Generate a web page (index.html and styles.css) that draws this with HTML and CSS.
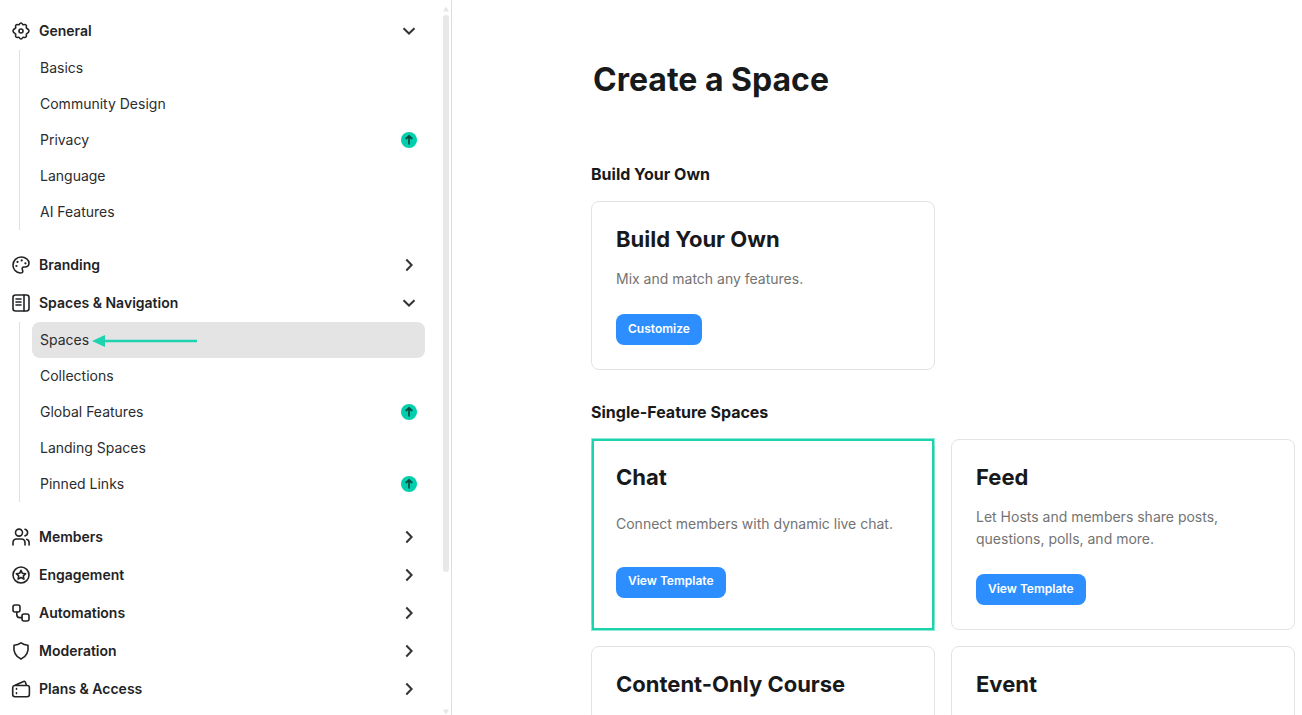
FILE: index.html
```html
<!DOCTYPE html>
<html lang="en">
<head>
<meta charset="utf-8">
<meta name="viewport" content="width=device-width, initial-scale=1">
<title>Create a Space</title>
<link rel="stylesheet" href="styles.css">
</head>
<body>
<svg class="sprite" aria-hidden="true">
  <symbol id="chevron-down" viewBox="0 0 16 16"><path d="M2.5 5.2 8 10.5l5.500-5.300"/></symbol>
  <symbol id="chevron-right" viewBox="0 0 16 16"><path d="M5.300 2.500 10.600 8l-5.300 5.500"/></symbol>
  <symbol id="upgrade" viewBox="0 0 16 16"><circle cx="8" cy="8" r="8" fill="#00ceac" stroke="none"/><path d="M8 12.500V4.500M4.700 7 8 4l3.300 3" stroke="#0b4a3f" stroke-width="1.700" fill="none"/></symbol>
</svg>
<div class="app">
  <aside class="sidebar">
    <nav class="nav" aria-label="Settings">
      <button class="group" type="button" aria-expanded="true">
        <svg class="icon" viewBox="0 0 18 18"><path d="M7.300 2.300C7.800 1.400 8.300 1 9 1s1.200.4 1.700 1.300c.2.400.6.500 1 .4 1-.3 1.800-.2 2.300.3s.6 1.300.3 2.300c-.1.400 0 .8.400 1C15.600 6.800 17 7.800 17 9s-1.400 2.200-2.300 2.700c-.4.200-.5.600-.4 1 .3 1 .2 1.800-.3 2.300s-1.300.6-2.300.3c-.4-.1-.8 0-1 .4C10.200 16.600 9.700 17 9 17s-1.200-.4-1.700-1.300c-.2-.4-.6-.5-1-.4-1 .3-1.800.2-2.300-.3s-.6-1.300-.3-2.300c.1-.4 0-.8-.4-1C2.400 11.200 1 10.200 1 9s1.400-2.200 2.300-2.700c.4-.2.500-.6.400-1C3.400 4.300 3.500 3.500 4 3s1.300-.6 2.300-.3c.4.100.8 0 1-.4Z"/><circle cx="9" cy="9" r="2"/></svg>
        <span class="group-name">General</span>
        <svg class="chevron"><use href="#chevron-down"/></svg>
      </button>
      <ul class="items">
        <li><a class="item" href="#basics">Basics</a></li>
        <li><a class="item" href="#design">Community Design</a></li>
        <li><a class="item" href="#privacy">Privacy<svg class="upgrade"><use href="#upgrade"/></svg></a></li>
        <li><a class="item" href="#language">Language</a></li>
        <li><a class="item" href="#ai">AI Features</a></li>
      </ul>
      <button class="group" type="button" aria-expanded="false">
        <svg class="icon" viewBox="0 0 18 18"><path d="M8.300 17C4 16.600 1 13.300 1 9.200 1 4.500 4.600 1 9.200 1c4.400 0 7.800 2.800 7.800 6.300 0 2.500-2 3.900-4.200 3.700-1.700-.2-2.500.2-2.600 1.500-.1 1.200.6 1.600.6 2.900 0 1.100-.9 1.700-2.500 1.600Z"/><g class="dots"><circle cx="4.400" cy="10" r="1.100"/><circle cx="5.500" cy="5.900" r="1.100"/><circle cx="9.700" cy="4.400" r="1.100"/><circle cx="13.400" cy="7.300" r="1.100"/></g></svg>
        <span class="group-name">Branding</span>
        <svg class="chevron"><use href="#chevron-right"/></svg>
      </button>
      <button class="group" type="button" aria-expanded="true">
        <svg class="icon" viewBox="0 0 18 18"><rect x="1" y="1" width="16" height="16" rx="2.500"/><path d="M12 1v16M4 5h5M4 8h5M4 11h5"/></svg>
        <span class="group-name">Spaces &amp; Navigation</span>
        <svg class="chevron"><use href="#chevron-down"/></svg>
      </button>
      <ul class="items">
        <li><a class="item current" href="#spaces" aria-current="page">Spaces<svg class="pointer" viewBox="0 0 106 12"><path d="M0 6 13 0v12Z"/><path d="M12 4.700h93v2.600H12Z"/></svg></a></li>
        <li><a class="item" href="#collections">Collections</a></li>
        <li><a class="item" href="#global">Global Features<svg class="upgrade"><use href="#upgrade"/></svg></a></li>
        <li><a class="item" href="#landing">Landing Spaces</a></li>
        <li><a class="item" href="#pinned">Pinned Links<svg class="upgrade"><use href="#upgrade"/></svg></a></li>
      </ul>
      <button class="group" type="button" aria-expanded="false">
        <svg class="icon" viewBox="0 0 18 18"><circle cx="7" cy="4.600" r="3.500"/><path d="M1 17v-2.300c0-2.300 1.600-3.700 3.700-3.700h4.600c2.100 0 3.700 1.400 3.700 3.700V17M13 1.300c1.600.4 2.600 1.700 2.600 3.300S14.600 7.500 13 7.900M14.700 11.200c1.500.5 2.400 1.800 2.400 3.400V17"/></svg>
        <span class="group-name">Members</span>
        <svg class="chevron"><use href="#chevron-right"/></svg>
      </button>
      <button class="group" type="button" aria-expanded="false">
        <svg class="icon" viewBox="0 0 18 18"><circle cx="9" cy="9" r="8"/><path d="m9 4.300 1.400 3 3.300.4-2.400 2.200.6 3.200L9 11.500l-2.900 1.600.6-3.200-2.400-2.200 3.300-.4Z"/></svg>
        <span class="group-name">Engagement</span>
        <svg class="chevron"><use href="#chevron-right"/></svg>
      </button>
      <button class="group" type="button" aria-expanded="false">
        <svg class="icon" viewBox="0 0 18 18"><rect x="1" y="1" width="7" height="7" rx="2"/><rect x="10" y="10" width="7" height="7" rx="2"/><path d="M4.800 8v2.800c0 1.900.9 2.800 2.800 2.800H10"/></svg>
        <span class="group-name">Automations</span>
        <svg class="chevron"><use href="#chevron-right"/></svg>
      </button>
      <button class="group" type="button" aria-expanded="false">
        <svg class="icon" viewBox="0 0 18 18"><path d="M9 .9C11.300 2.600 13.700 3.100 16 3.200c.8 6.700-1.100 11.300-7 13.900C3.100 14.500 1.200 9.900 2 3.200 4.300 3.100 6.700 2.600 9 .9Z"/></svg>
        <span class="group-name">Moderation</span>
        <svg class="chevron"><use href="#chevron-right"/></svg>
      </button>
      <button class="group" type="button" aria-expanded="false">
        <svg class="icon" viewBox="0 0 18 18"><path d="M3 5.500h12.200c1.400 0 2.200.8 2.200 2.200v6.800c0 1.400-.8 2.200-2.200 2.200H2.900c-1.400 0-2.200-.8-2.200-2.200V7.700c0-1.300.8-1.900 1.800-2.200L11.600 1.500c.9-.4 1.500-.1 1.800.7l1.100 3.300M4.500 8.500v.8M4.500 12.800v.8"/></svg>
        <span class="group-name">Plans &amp; Access</span>
        <svg class="chevron"><use href="#chevron-right"/></svg>
      </button>
    </nav>
    <div class="scrollbar" aria-hidden="true">
      <svg class="scroll-arrow" viewBox="0 0 6 6"><path d="M3 .5 6 5.500H0Z"/></svg>
      <div class="track"><div class="thumb"></div></div>
      <svg class="scroll-arrow" viewBox="0 0 6 6"><path d="M3 5.500 0 .5h6Z"/></svg>
    </div>
  </aside>
  <main class="main">
    <h1 class="title">Create a Space</h1>
    <section class="section">
      <h2 class="section-title">Build Your Own</h2>
      <div class="cards">
        <article class="card">
          <h3 class="card-title">Build Your Own</h3>
          <p class="card-text">Mix and match any features.</p>
          <button class="action" type="button">Customize</button>
        </article>
      </div>
    </section>
    <section class="section">
      <h2 class="section-title">Single-Feature Spaces</h2>
      <div class="cards">
        <article class="card highlighted">
          <h3 class="card-title">Chat</h3>
          <p class="card-text">Connect members with dynamic live chat.</p>
          <button class="action" type="button">View Template</button>
        </article>
        <article class="card">
          <h3 class="card-title">Feed</h3>
          <p class="card-text">Let Hosts and members share posts, questions, polls, and more.</p>
          <button class="action" type="button">View Template</button>
        </article>
        <article class="card">
          <h3 class="card-title">Content-Only Course</h3>
        </article>
        <article class="card">
          <h3 class="card-title">Event</h3>
        </article>
      </div>
    </section>
  </main>
</div>
</body>
</html>
```
FILE: styles.css
```css
* { box-sizing: border-box; }

body {
  margin: 0;
  background: #fff;
  color: #18191b;
  font-family: Inter, "Liberation Sans", sans-serif;
  font-size: 14px;
}

h1, h2, h3, p, ul { margin: 0; padding: 0; }

.sprite { display: none; }

.app {
  display: grid;
  grid-template-columns: 452px 1fr;
  height: 100vh;
  overflow: hidden;
}

.sidebar {
  display: flex;
  min-height: 0;
  border-right: 1px solid #dedede;
  padding-right: 2px;
}

.nav {
  flex: 1;
  min-width: 0;
  overflow: hidden;
  padding: 12px 18px 0 0;
}

.group {
  display: flex;
  align-items: center;
  gap: 9px;
  width: 100%;
  height: 38px;
  padding: 0 8px 0 12px;
  border: 0;
  background: none;
  color: #222325;
  font: 600 14px/20px Inter, "Liberation Sans", sans-serif;
  text-align: left;
}

.group-name { flex: 1; }

.icon {
  width: 18px;
  height: 18px;
  overflow: visible;
  fill: none;
  stroke: #222325;
  stroke-width: 1.6;
  stroke-linecap: round;
  stroke-linejoin: round;
}

.icon .dots { fill: #222325; stroke: none; }

.chevron {
  width: 16px;
  height: 16px;
  fill: none;
  stroke: #333436;
  stroke-width: 2;
}

.items {
  margin: 0 0 16px 19px;
  padding-left: 12px;
  border-left: 1px solid #e0e0e0;
  list-style: none;
}

.item {
  display: flex;
  align-items: center;
  height: 36px;
  padding: 0 8px;
  border-radius: 8px;
  color: #2b2c2e;
  line-height: 20px;
  text-decoration: none;
}

.current { background: #e4e4e4; }

.upgrade {
  width: 16px;
  height: 16px;
  margin-left: auto;
}

.pointer {
  width: 106px;
  height: 12px;
  margin: 2px 0 0 3px;
  fill: #1dd3b0;
}

.scrollbar {
  display: flex;
  flex-direction: column;
  gap: 3px;
  width: 6px;
  padding: 6px 0 0;
}

.scroll-arrow {
  flex: none;
  width: 6px;
  height: 6px;
  fill: #e6e6e6;
}

.track { flex: 1; }

.thumb {
  height: 80.6%;
  border-radius: 3px;
  background: #e8e8e8;
}

.main {
  min-width: 0;
  overflow: hidden;
  padding: 60px 7px 0 139px;
}

.title {
  margin-bottom: 64px;
  padding-left: 2px;
  font-size: 32px;
  line-height: 40px;
  font-weight: 700;
}

.section { margin-bottom: 32px; }

.section-title {
  margin-bottom: 17px;
  font-size: 16px;
  line-height: 20px;
  font-weight: 700;
}

.cards {
  display: grid;
  grid-template-columns: 1fr 1fr;
  gap: 16px;
}

.card {
  position: relative;
  display: grid;
  align-items: start;
  justify-items: start;
  padding: 24px;
  border: 1px solid #e3e3e3;
  border-radius: 8px;
}

.card-title {
  font-size: 22px;
  line-height: 26px;
  font-weight: 700;
}

.card-text {
  margin-top: 16px;
  color: #737373;
  line-height: 22px;
}

.action {
  height: 31px;
  margin-top: 24px;
  padding: 0 12px 2px;
  border: 0;
  border-radius: 8px;
  background: #2d8fff;
  color: #fff;
  font: 600 12px/16px Inter, "Liberation Sans", sans-serif;
}

.highlighted::after {
  content: "";
  position: absolute;
  inset: -1px 0;
  border: 2px solid #1dd3ae;
  box-shadow: 0 0 0 1px #1dd3ae80;
}
```
